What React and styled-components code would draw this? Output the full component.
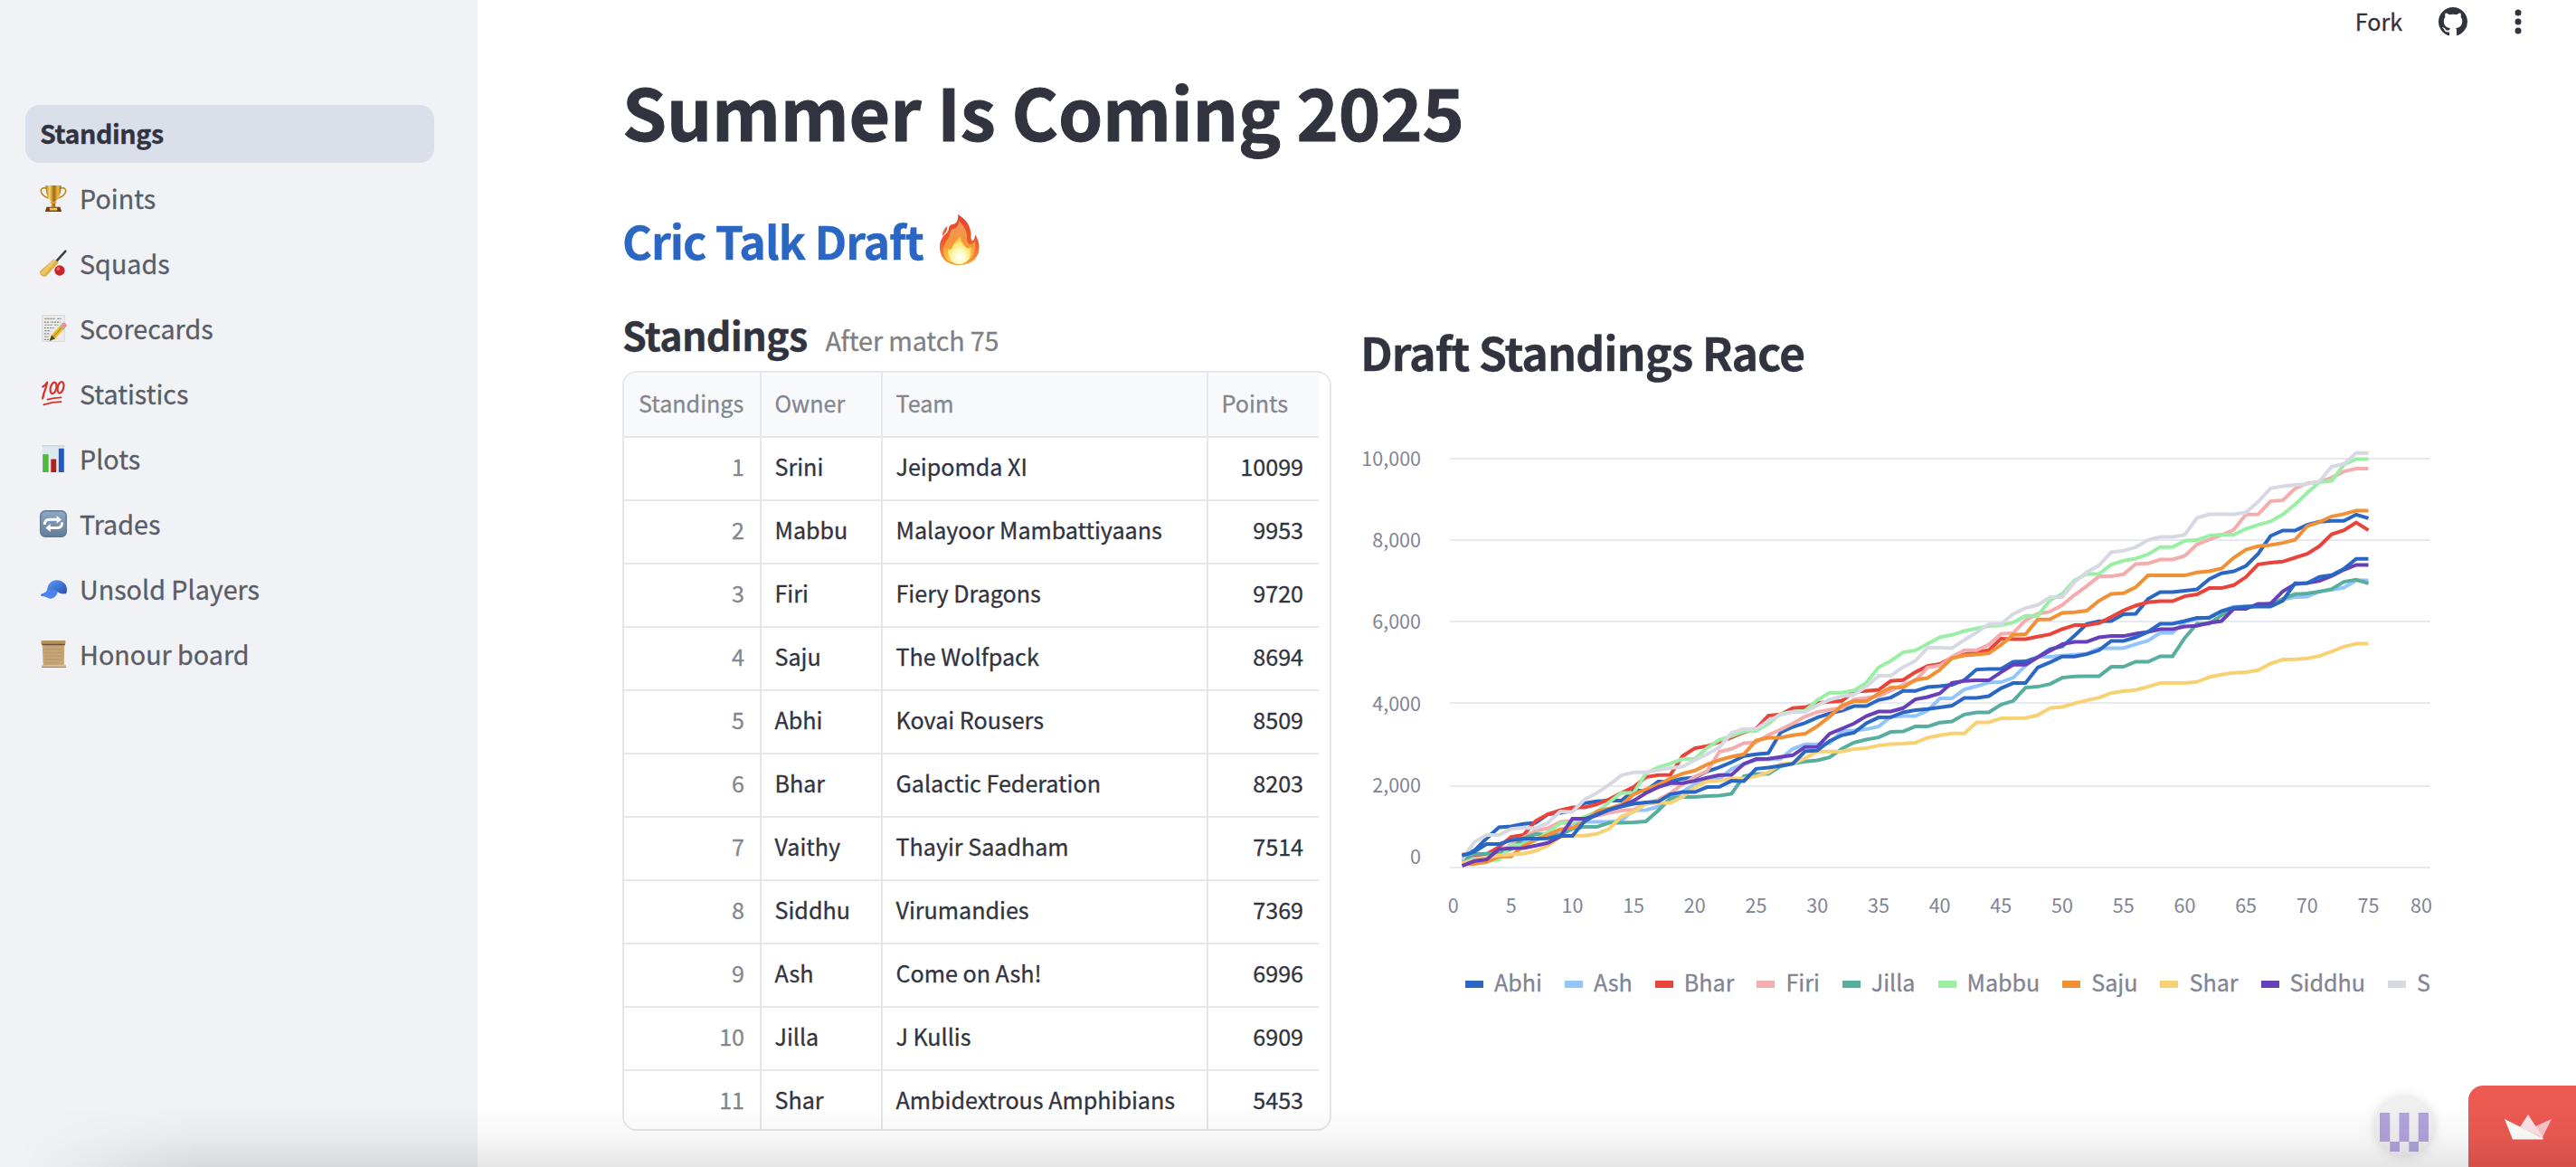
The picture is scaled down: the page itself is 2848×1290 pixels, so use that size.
import React from "react";
import styled, { createGlobalStyle } from "styled-components";

const INK = "#31333f";
const MUTED = "#808495";
const RULE = "#e6e7ea";

const GlobalStyle = createGlobalStyle`
  * { box-sizing: border-box; }
  html, body { margin: 0; padding: 0; }
  body {
    width: 2848px;
    height: 1290px;
    overflow: hidden;
    background: #fff;
    color: ${INK};
    font-family: "Noto Sans CJK JP", "Noto Sans CJK SC", "Noto Sans", sans-serif;
    -webkit-text-stroke: 0.3px currentColor;
  }
`;

/* ---------- page shell ---------- */

const Shell = styled.div`
  position: relative;
  display: flex;
  width: 2848px;
  height: 1290px;
  overflow: hidden;
`;

const Sidebar = styled.nav`
  display: flex;
  flex-direction: column;
  gap: 8px;
  width: 528px;
  flex: none;
  padding: 116px 48px 0 28px;
  background: #f0f2f6;
`;

const NavItem = styled.a`
  display: flex;
  align-items: center;
  gap: 14px;
  height: 64px;
  padding: 0 16px;
  border-radius: 16px;
  background: ${(p) => (p.$active ? "#dbdfe9" : "transparent")};
  color: ${(p) => (p.$active ? INK : "#5a5c68")};
  font-size: 28.7px;
  font-weight: ${(p) => (p.$active ? 700 : 400)};
  letter-spacing: ${(p) => (p.$active ? "-0.45px" : "0")};
`;

const NavIcon = styled.svg`
  width: 30px;
  height: 30px;
  flex: none;
  margin-top: -3px;
`;

const NavLabel = styled.span`
  line-height: 60px;
  padding-bottom: 3px;
`;

const Main = styled.main`
  flex: 1;
  display: flex;
  flex-direction: column;
  padding: 69px 0 0 160px;
`;

const Title = styled.h1`
  margin: 0;
  height: 127px;
  font-size: 78.8px;
  line-height: 106px;
  font-weight: 700;
  letter-spacing: -0.18px;
  white-space: nowrap;
  -webkit-text-stroke: 1px currentColor;
`;

const Subtitle = styled.h2`
  display: flex;
  align-items: center;
  gap: 15px;
  margin: 0;
  height: 138px;
  padding-bottom: 0;
  font-size: 50.2px;
  line-height: 138px;
  font-weight: 700;
  letter-spacing: -1.03px;
  color: #2a66c4;
  white-space: nowrap;
`;

const FireIcon = styled.svg`
  width: 48px;
  height: 58px;
`;

const Columns = styled.div`
  display: flex;
  gap: 32px;
`;

const TableColumn = styled.section`
  width: 784px;
`;

const TableHeading = styled.div`
  display: flex;
  align-items: baseline;
  gap: 20px;
  height: 76px;
`;

const TableTitle = styled.h3`
  margin: 0;
  font-size: 43px;
  line-height: 70px;
  font-weight: 700;
  letter-spacing: -0.7px;
`;

const TableNote = styled.span`
  font-size: 28.7px;
  letter-spacing: -0.1px;
  color: #808080;
`;

/* ---------- table ---------- */

const TableFrame = styled.div`
  width: 784px;
  height: 840px;
  overflow: hidden;
  border: 2px solid ${RULE};
  border-radius: 16px;
`;

const Row = styled.div`
  display: grid;
  grid-template-columns: 152px 134px 360px 122px;
  width: 768px;
  height: ${(p) => (p.$head ? 72 : 70)}px;
  border-bottom: 2px solid ${RULE};
  background: ${(p) => (p.$head ? "#f8f9fb" : "#fff")};
`;

const Cell = styled.div`
  padding-left: ${(p) => (p.$first ? 16 : 14.5)}px;
  border-right: ${(p) => (p.$last ? "none" : `2px solid ${RULE}`)};
  padding-right: ${(p) => (p.$last ? 17 : p.$first && p.$head ? 0 : 17)}px;
  font-size: 25.1px;
  line-height: ${(p) => (p.$head ? 66 : 62)}px;
  text-align: ${(p) => (p.$right ? "right" : "left")};
  color: ${(p) => (p.$dim ? "#84868f" : INK)};
  white-space: nowrap;
`;

/* ---------- chart ---------- */

const ChartColumn = styled.section`
  width: 1190px;
`;

const ChartTitle = styled.h3`
  margin: 0;
  height: 130px;
  font-size: 50.2px;
  line-height: 108px;
  font-weight: 700;
  letter-spacing: -1.05px;
  white-space: nowrap;
`;

const Plot = styled.svg`
  display: block;
  width: 1190px;
  height: 600px;
  margin-left: 1px;

  text {
    font-size: 21.5px;
    fill: ${MUTED};
    stroke: none;
    -webkit-text-stroke: 0.3px ${MUTED};
  }
`;

const Legend = styled.div`
  display: flex;
  align-items: center;
  gap: 25px;
  width: 1190px;
  height: 44px;
  margin-top: 2px;
  padding-left: 116px;
`;

const LegendItem = styled.div`
  display: flex;
  align-items: center;
  gap: 12px;
  flex: none;
  font-size: 25.1px;
  line-height: 40px;
  color: ${MUTED};
`;

const Swatch = styled.span`
  width: 20px;
  height: 8px;
  background: ${(p) => p.$color};
`;

const LegendText = styled.span`
  padding-bottom: 6px;
`;

/* ---------- overlays ---------- */

const Toolbar = styled.header`
  position: absolute;
  top: 0;
  right: 57px;
  display: flex;
  align-items: center;
  height: 48px;
`;

const ForkLink = styled.a`
  font-size: 25.1px;
  line-height: 46px;
  padding-bottom: 2px;
  margin-right: 40px;
`;

const ToolbarIcon = styled.svg`
  display: block;
  width: ${(p) => p.$w}px;
  height: 32px;
  margin-right: ${(p) => p.$gap || 0}px;
`;

const BottomShade = styled.div`
  position: absolute;
  left: 0;
  right: 0;
  bottom: 0;
  height: 70px;
  background: linear-gradient(to bottom, rgba(0, 0, 0, 0), rgba(0, 0, 0, 0.03) 50%, rgba(0, 0, 0, 0.1));
  mask-image: linear-gradient(to right, transparent 20px, #000 220px);
  pointer-events: none;
`;

const Avatar = styled.div`
  position: absolute;
  left: 2626px;
  top: 1213px;
  width: 64px;
  height: 64px;
  border-radius: 50%;
  background: #f0f0f0;
  box-shadow: 0 0 14px rgba(0, 0, 0, 0.16);
`;

const HostBadge = styled.div`
  position: absolute;
  right: 0;
  bottom: 0;
  width: 119px;
  height: 90px;
  padding: 31px 0 0 39px;
  border-top-left-radius: 16px;
  background: #ed5a52;
`;

/* ---------- data ---------- */

const standings = [
  ["Srini", "Jeipomda XI", 10099],
  ["Mabbu", "Malayoor Mambattiyaans", 9953],
  ["Firi", "Fiery Dragons", 9720],
  ["Saju", "The Wolfpack", 8694],
  ["Abhi", "Kovai Rousers", 8509],
  ["Bhar", "Galactic Federation", 8203],
  ["Vaithy", "Thayir Saadham", 7514],
  ["Siddhu", "Virumandies", 7369],
  ["Ash", "Come on Ash!", 6996],
  ["Jilla", "J Kullis", 6909],
  ["Shar", "Ambidextrous Amphibians", 5453],
];

/* Running totals after matches 1 to 75; 1355 units are 10,000 points. */
const series = [
  ["Abhi", "#2a66c4", [39,56,96,133,136,144,148,176,181,188,213,219,221,221,254,254,284,285,294,298,318,332,349,369,375,379,447,466,479,497,510,520,535,535,555,563,585,585,598,601,605,621,656,658,658,682,683,697,724,733,768,807,816,817,839,841,890,913,913,917,922,956,975,982,1000,1040,1099,1117,1117,1136,1146,1149,1149,1170,1158]],
  ["Ash", "#92c5fc", [21,33,36,46,66,86,91,101,111,146,151,151,151,155,189,190,201,226,251,276,291,294,326,343,356,358,360,393,408,408,412,451,454,458,467,499,502,502,520,560,560,590,601,613,614,629,669,698,698,702,705,709,726,727,727,740,752,778,778,814,823,830,850,864,866,868,876,888,896,898,915,920,928,952,952]],
  ["Bhar", "#e9433a", [43,41,44,68,101,107,154,176,189,199,199,209,226,247,266,299,306,307,369,395,402,416,431,448,460,503,507,528,531,545,549,552,583,585,589,618,621,647,668,674,696,706,714,720,758,757,757,765,773,790,803,803,810,830,852,868,879,883,883,899,905,926,926,936,963,1005,1010,1014,1027,1040,1065,1105,1118,1144,1118]],
  ["Firi", "#f5acac", [14,21,26,46,76,98,121,130,151,154,161,171,181,188,191,211,224,246,276,301,319,383,393,412,415,439,457,477,500,515,523,527,557,562,568,586,606,619,663,669,698,720,720,739,774,777,820,841,848,870,903,933,965,965,972,1006,1008,1021,1021,1033,1071,1087,1102,1120,1170,1171,1214,1217,1256,1274,1277,1293,1313,1322,1322]],
  ["Jilla", "#58ae9e", [24,44,45,45,61,96,110,109,108,128,134,134,148,148,149,152,188,229,233,233,236,238,244,302,310,310,335,344,351,355,365,393,414,424,431,449,451,467,467,480,484,507,514,514,540,552,596,599,608,629,633,634,634,665,665,682,682,700,700,761,808,808,836,860,864,866,869,890,906,908,914,923,947,954,942]],
  ["Mabbu", "#9aefa4", [10,16,23,25,73,74,91,116,146,148,168,184,216,247,247,311,332,344,359,360,396,423,436,451,452,476,509,516,519,555,579,579,587,612,663,685,713,719,741,763,771,784,792,800,803,812,834,835,886,907,952,973,973,1004,1017,1024,1038,1062,1062,1083,1085,1100,1103,1103,1123,1136,1147,1170,1203,1242,1277,1282,1336,1354,1354]],
  ["Saju", "#f19035", [10,11,18,36,36,71,91,108,126,131,151,186,195,208,242,259,274,295,311,321,341,356,367,375,421,430,430,438,443,468,500,537,551,551,576,596,596,622,628,655,694,703,706,710,738,771,773,822,823,844,846,851,884,907,909,929,968,968,968,968,978,982,991,1027,1054,1065,1069,1076,1086,1132,1145,1164,1172,1183,1183]],
  ["Shar", "#f8d175", [14,26,33,40,43,45,55,71,101,105,105,111,128,169,184,211,214,214,234,265,285,287,295,295,302,315,343,344,362,384,384,384,392,395,404,409,410,413,430,438,444,444,481,481,494,494,495,505,528,532,544,554,563,578,584,588,599,611,611,611,615,631,639,645,647,654,676,689,690,693,701,716,732,742,742]],
  ["Siddhu", "#673fb9", [5,21,26,60,63,64,72,81,102,161,161,174,191,204,221,246,266,279,279,287,297,306,307,343,359,360,366,372,399,400,443,460,477,502,517,517,528,557,565,577,612,618,620,620,647,672,672,697,718,740,748,748,763,767,767,775,781,790,790,799,801,811,817,857,857,874,874,915,939,943,950,966,987,1003,1003]],
  ["S", "#d6d9e4", [26,84,107,107,128,131,130,148,185,184,225,247,274,305,315,315,323,329,334,356,376,398,446,459,458,486,506,515,515,537,556,567,573,600,635,636,664,685,728,728,727,754,779,806,807,840,860,870,896,896,946,979,1001,1045,1050,1062,1085,1096,1096,1103,1159,1171,1171,1171,1177,1213,1257,1264,1268,1271,1280,1329,1338,1374,1374]],
  ["Vaithy", "#2a66c4", [39,52,77,77,90,95,95,96,104,104,153,176,191,202,211,215,218,242,250,250,266,267,287,286,327,331,337,344,385,388,419,438,447,478,497,498,514,521,525,530,536,562,562,568,594,611,611,663,680,699,699,707,720,751,751,763,781,808,808,817,827,827,850,861,864,865,865,884,942,943,963,969,990,1023,1023]],
];

/* [label, grid line y, text baseline y] */
const yTicks = [
  ["10,000", 43, 51],
  ["8,000", 133, 141],
  ["6,000", 223, 231],
  ["4,000", 313, 322],
  ["2,000", 405, 412],
  ["0", 495, 491],
];

const X0 = 98;
const STEP = 13.54;
const BASE = 494.8;

const linePoints = (values) =>
  values.map((v, i) => `${(X0 + STEP * (i + 1)).toFixed(1)},${(BASE - v / 3).toFixed(1)}`).join(" ");

const xLabelAt = (n) => (n === 0 ? 101.7 : n === 80 ? 1172 : X0 + STEP * n);

/* ---------- emoji drawings, 28 x 28 ---------- */

const Trophy = () => (
  <NavIcon viewBox="0 0 28 28">
    <defs>
      <linearGradient id="gold" x1="0" x2="1">
        <stop offset="0" stopColor="#a8741a" />
        <stop offset="0.25" stopColor="#f6d667" />
        <stop offset="0.55" stopColor="#a4660f" />
        <stop offset="0.8" stopColor="#f0c04a" />
        <stop offset="1" stopColor="#9a6414" />
      </linearGradient>
    </defs>
    <path d="M7 4C2 2 0 6 2 9c1.500 3 4 4 7 5M21 4c5-2 7 2 5 5-1.500 3-4 4-7 5" fill="none" stroke="#c08a25" strokeWidth="1.500" />
    <path d="M6 1h16c0 8-2 14-6.500 17l1 5h-5l1-5C8 15 6 9 6 1z" fill="url(#gold)" />
    <path d="M11 17.500h6v2h-6z" fill="#d9a233" />
    <path d="M7 23h14l1.500 5H5.500z" fill="#7c3a13" />
    <path d="M10 24h8v2.700h-8z" fill="#eec35a" />
  </NavIcon>
);

const CricketBat = () => (
  <NavIcon viewBox="0 0 28 28">
    <path d="M17 12 26.500 1.500" stroke="#3c3d42" strokeWidth="2.300" strokeLinecap="round" />
    <path d="M14.500 9.500 19.500 13 7 27c-2 1.300-4 1-5.500-.5S-.5 23 1 21.500z" fill="#dfb04a" />
    <path d="M14.500 9.500 17 11.300 4 26.500 1 24z" fill="#edc765" />
    <circle cx="20.500" cy="21.500" r="5.300" fill="#c7262a" />
    <circle cx="19" cy="19.700" r="1.800" fill="#ee6a66" />
  </NavIcon>
);

const Memo = () => (
  <NavIcon viewBox="0 0 28 28">
    <path d="M2.500.5h23v27h-23z" fill="#ebebea" stroke="#d2d4d6" strokeWidth=".7" />
    <path d="M5 4h11M18 4h4M4.500 7.500h6M12 7.500h9M5 10.500h8M15 10.500h4M4.500 13.500h10M5 16.500h6M4.500 19.500h6M5 22.500h4M4.500 25.500h5" stroke="#888" strokeWidth="1.100" strokeDasharray="2 .8" />
    <path d="m10 27 2-6L21.500 10.500l4 3.500L16 24.500z" fill="#edbd2c" />
    <path d="m10 27 2-6 4 3.500z" fill="#51482e" />
    <path d="m14 22.800 9.500-10.500" stroke="#b8860e" />
    <path d="m21.500 10.500 2-2.200q1.700-1 3.300.5t.7 3l-2 2.200z" fill="#ec8d97" />
    <path d="m20.500 11.600 4 3.500 1-1.100-4-3.500z" fill="#a7b0b3" />
  </NavIcon>
);

const Hundred = () => (
  <NavIcon viewBox="0 0 28 28" fill="none" stroke="#d83127" strokeLinecap="round" strokeLinejoin="round">
    <path d="M3 7c2-1 3.500-2.500 4.500-4.500C7 8 4 12 3 19" strokeWidth="2.100" />
    <ellipse cx="14" cy="8.300" rx="3" ry="6" transform="rotate(14 14 8.300)" strokeWidth="2" />
    <ellipse cx="21.500" cy="7.700" rx="3" ry="6" transform="rotate(14 21.500 7.700)" strokeWidth="2" />
    <path d="M8 20.200c5-1.500 9-2 14-2.100M4 25.500c6-2 11-3 18-3" strokeWidth="1.700" />
  </NavIcon>
);

const BarChart = () => (
  <NavIcon viewBox="0 0 28 28">
    <path d="M2.500 0h23v28h-23z" fill="#dfe7ef" />
    <path d="M2.500 0h23v1.500h-23z" fill="#ccd4dd" />
    <path d="M3 9.500h6V28H3z" fill="#50b83b" />
    <path d="M11.500 14.500h5.500V28h-5.500z" fill="#b0211c" />
    <path d="M19.500 3.500H25V28h-5.500z" fill="#2258c4" />
  </NavIcon>
);

const Repeat = () => (
  <NavIcon viewBox="0 0 28 28">
    <defs>
      <linearGradient id="steel" x1="0" x2="0" y1="0" y2="1">
        <stop offset="0" stopColor="#8ba9c5" />
        <stop offset="1" stopColor="#647c97" />
      </linearGradient>
    </defs>
    <rect x=".7" y=".7" width="26.600" height="26.600" rx="5" fill="url(#steel)" stroke="#5d7895" strokeWidth="1.300" />
    <g fill="none" stroke="#fff" strokeWidth="2.700">
      <path d="M5 15c0-4 2-5.500 5-5.500h9" />
      <path d="M23 12.500c0 4-2 5.700-5 5.700H9.500" />
    </g>
    <path d="M17.500 5.500 22.500 9.700l-5 4zM11 14v8.500l-5-4.300z" fill="#fff" />
  </NavIcon>
);

const Cap = () => (
  <NavIcon viewBox="0 0 28 28">
    <defs>
      <linearGradient id="cap" x1="0" x2="1" y1="0" y2="1">
        <stop offset="0" stopColor="#5f9bf6" />
        <stop offset="1" stopColor="#2550b4" />
      </linearGradient>
    </defs>
    <path d="M7.500 16C8 9 12 5 17.500 5S28 9 28 14.500c0 2.500-.5 4.500-1.500 4.500-3 .5-6-.5-8-2z" fill="url(#cap)" />
    <path d="M7.500 15.500c4-2 8-1 11 1.500-1 4-4 7-7.500 7-3 0-5.500-3-9.500-2.500-1-.5-.5-2 .5-2.500 2.500-.5 4-1.500 5.500-3.500z" fill="#4d84ec" />
  </NavIcon>
);

const Scroll = () => (
  <NavIcon viewBox="0 0 28 28">
    <path d="M2.500 2h23l-.5 25H3.500z" fill="#c6a678" />
    <path d="M1.500 0h25v3.500l-25 .5z" fill="#b8935f" />
    <path d="M2 3.500h24V5H2.500z" fill="#6d5233" />
    <path d="M5 9h18M5 12.500h18M5 16h18M5 19.500h18M5 23h14" stroke="#b59567" strokeWidth=".8" />
    <path d="M2 25.500 27 25v2.500L2 28z" fill="#d8bd90" />
    <path d="M2 27.600h25" stroke="#8f7148" strokeWidth=".8" />
  </NavIcon>
);

const navItems = [
  ["Points", Trophy],
  ["Squads", CricketBat],
  ["Scorecards", Memo],
  ["Statistics", Hundred],
  ["Plots", BarChart],
  ["Trades", Repeat],
  ["Unsold Players", Cap],
  ["Honour board", Scroll],
];

const Fire = () => (
  <FireIcon viewBox="0 0 48 58">
    <defs>
      <linearGradient id="flame" x1="0" x2="0" y1="0" y2="1">
        <stop offset="0" stopColor="#e8442c" />
        <stop offset="0.55" stopColor="#ee5a30" />
        <stop offset="1" stopColor="#f6a23a" />
      </linearGradient>
      <linearGradient id="flameMid" x1="0" x2="0" y1="0" y2="1">
        <stop offset="0" stopColor="#f0915a" />
        <stop offset="0.6" stopColor="#f59a35" />
        <stop offset="1" stopColor="#fbd84a" />
      </linearGradient>
      <radialGradient id="flameCore" cx="0.500" cy="0.750" r="0.650">
        <stop offset="0" stopColor="#ffffff" />
        <stop offset="0.4" stopColor="#fefac0" />
        <stop offset="1" stopColor="#fbd23c" />
      </radialGradient>
    </defs>
    <path d="M23 1c7 4 14 11 14.500 22 0 4 0 7 1.500 7 2 0 3-4 3-7 3 5 5 10 4.500 16C46 49 38 57 24.500 57S4 50 3 39c-.5-6 1-10 4-14 3-3 5-4 6-8 0-3 2-5 5-5 4-1 6-6 5-11z" fill="url(#flame)" />
    <path d="M6 25c0-5 2-9 5.500-11-.5 3-.5 4-1.500 6-1 2-2.500 3-4 5z" fill="#ea5a38" />
    <path d="M24 8c5 5 9 10 9 18 0 5 1 8 4 8 2 0 4-2 5-4 2 13-4 24-17 25C12 56 6 48 7 38c1-5 4-8 6-12s1-8 5-9 6-4 6-9z" fill="url(#flameMid)" />
    <path d="M25.500 25c0 5 3 8 5 11 2 3 5 3 7 1 1 11-4 19-12.500 19S11 49 12 39c2 2 4 1 5-2 2-5 5-7 8.500-12z" fill="url(#flameCore)" />
  </FireIcon>
);

export default function App() {
  return (
    <Shell>
      <GlobalStyle />
      <Sidebar>
        <NavItem $active>
          <NavLabel>Standings</NavLabel>
        </NavItem>
        {navItems.map(([label, Icon]) => (
          <NavItem key={label}>
            <Icon />
            <NavLabel>{label}</NavLabel>
          </NavItem>
        ))}
      </Sidebar>

      <Main>
        <Title>Summer Is Coming 2025</Title>
        <Subtitle>
          Cric Talk Draft <Fire />
        </Subtitle>
        <Columns>
          <TableColumn>
            <TableHeading>
              <TableTitle>Standings</TableTitle>
              <TableNote>After match 75</TableNote>
            </TableHeading>
            <TableFrame>
              <Row $head>
                <Cell $head $dim $first>Standings</Cell>
                <Cell $head $dim>Owner</Cell>
                <Cell $head $dim>Team</Cell>
                <Cell $head $dim $last>Points</Cell>
              </Row>
              {standings.map(([owner, team, points], i) => (
                <Row key={owner}>
                  <Cell $right $dim $first>{i + 1}</Cell>
                  <Cell>{owner}</Cell>
                  <Cell>{team}</Cell>
                  <Cell $right $last>{points}</Cell>
                </Row>
              ))}
            </TableFrame>
          </TableColumn>

          <ChartColumn>
            <ChartTitle>Draft Standings Race</ChartTitle>
            <Plot viewBox="0 0 1190 600">
              {yTicks.map(([label, y, base]) => (
                <g key={label}>
                  <line x1="98" x2="1182" y1={y} y2={y} stroke="#e6eaf0" strokeWidth="2" />
                  <text x="66" y={base} textAnchor="end">{label}</text>
                </g>
              ))}
              {series.map(([name, color, values]) => (
                <polyline key={name} points={linePoints(values)} fill="none" stroke={color} strokeWidth="4" />
              ))}
              {Array.from({ length: 17 }, (_, i) => i * 5).map((n) => (
                <text key={n} x={xLabelAt(n)} y="545" textAnchor="middle">{n}</text>
              ))}
            </Plot>
            <Legend>
              {series.slice(0, 10).map(([name, color]) => (
                <LegendItem key={name}>
                  <Swatch $color={color} />
                  <LegendText>{name}</LegendText>
                </LegendItem>
              ))}
            </Legend>
          </ChartColumn>
        </Columns>
      </Main>

      <Toolbar>
        <ForkLink>Fork</ForkLink>
        <ToolbarIcon $w={32} $gap={49} viewBox="0 0 16 16" fill={INK}>
          <path d="M8 0C3.580 0 0 3.580 0 8c0 3.540 2.290 6.530 5.470 7.590.4.070.550-.170.550-.380 0-.190-.010-.820-.010-1.490-2.010.370-2.530-.490-2.690-.940-.090-.230-.480-.940-.820-1.130-.280-.150-.680-.520-.010-.530.630-.010 1.080.580 1.230.820.720 1.210 1.870.870 2.330.660.070-.520.280-.870.510-1.070-1.780-.200-3.640-.890-3.640-3.950 0-.870.310-1.590.820-2.150-.080-.200-.360-1.020.080-2.120 0 0 .670-.210 2.200.820.640-.180 1.320-.270 2-.270s1.360.090 2 .270c1.530-1.040 2.200-.820 2.200-.820.440 1.100.160 1.920.080 2.120.510.560.820 1.270.820 2.150 0 3.070-1.870 3.750-3.650 3.950.290.250.540.730.540 1.480 0 1.070-.010 1.930-.010 2.200 0 .210.150.460.550.380A8.010 8.010 0 0 0 16 8c0-4.420-3.580-8-8-8z" />
        </ToolbarIcon>
        <ToolbarIcon $w={14} viewBox="0 0 14 32" fill={INK}>
          <circle cx="7" cy="6" r="3.500" />
          <circle cx="7" cy="16" r="3.500" />
          <circle cx="7" cy="26" r="3.500" />
        </ToolbarIcon>
      </Toolbar>

      <Avatar>
        <svg width="64" height="64" viewBox="0 0 64 64" fill="#b0a4dc">
          <path d="M5 17h11.300v32H5zM26.500 17h11v32h-11zM47.700 17H59v32H47.700zM16.300 49H27v11H16.300zM37.300 49H48v11H37.300z" />
        </svg>
      </Avatar>
      <HostBadge>
        <svg width="54" height="30" viewBox="0 0 54 30">
          <path d="M53 6 42 28 33 15z" fill="#f9c5cb" />
          <path d="M27 1 44 27 18 15z" fill="#fbe3e8" />
          <path d="M1 6 44 27.500 43 28.500H10z" fill="#fffdfb" />
        </svg>
      </HostBadge>
      <BottomShade />
    </Shell>
  );
}
